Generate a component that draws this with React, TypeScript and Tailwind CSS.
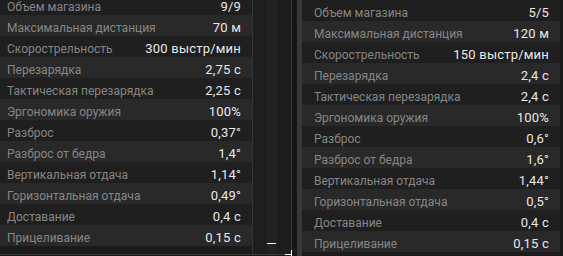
import React from "react";

type Stat = { label: string; value: string };

const leftStats: Stat[] = [
  { label: "Объем магазина", value: "9/9" },
  { label: "Максимальная дистанция", value: "70 м" },
  { label: "Скорострельность", value: "300 выстр/мин" },
  { label: "Перезарядка", value: "2,75 с" },
  { label: "Тактическая перезарядка", value: "2,25 с" },
  { label: "Эргономика оружия", value: "100%" },
  { label: "Разброс", value: "0,37°" },
  { label: "Разброс от бедра", value: "1,4°" },
  { label: "Вертикальная отдача", value: "1,14°" },
  { label: "Горизонтальная отдача", value: "0,49°" },
  { label: "Доставание", value: "0,4 с" },
  { label: "Прицеливание", value: "0,15 с" },
];

const rightStats: Stat[] = [
  { label: "Объем магазина", value: "5/5" },
  { label: "Максимальная дистанция", value: "120 м" },
  { label: "Скорострельность", value: "150 выстр/мин" },
  { label: "Перезарядка", value: "2,4 с" },
  { label: "Тактическая перезарядка", value: "2,4 с" },
  { label: "Эргономика оружия", value: "100%" },
  { label: "Разброс", value: "0,6°" },
  { label: "Разброс от бедра", value: "1,6°" },
  { label: "Вертикальная отдача", value: "1,44°" },
  { label: "Горизонтальная отдача", value: "0,5°" },
  { label: "Доставание", value: "0,4 с" },
  { label: "Прицеливание", value: "0,15 с" },
];

const StatRows = ({ stats, pl }: { stats: Stat[]; pl: string }) => (
  <div className="flex flex-col">
    {stats.map((s, i) => (
      <div
        key={s.label}
        className={`flex h-[21px] items-center justify-between pt-[4px] ${pl} pr-[11px] ${
          i % 2 === 0 ? "bg-[#1f1f1f]" : "bg-[#292929]"
        }`}
      >
        <span className="text-[12px] text-[#868686]">{s.label}</span>
        <span className="text-[13px] tracking-[0.2px] text-[#e8e8e8]">{s.value}</span>
      </div>
    ))}
  </div>
);

const App = () => {
  return (
    <div
      className="flex h-[256px] w-[563px] overflow-hidden bg-[#1b1b1b] leading-none"
      style={{ fontFamily: "Roboto, 'Liberation Sans', sans-serif" }}
    >
      {/* left panel */}
      <div className="relative h-[255px] w-[292px] shrink-0 border-b border-r border-[#3a3a3a]">
        <div className="flex h-full overflow-hidden">
          <div className="-mt-[6px] w-[252px] shrink-0">
            <StatRows stats={leftStats} pl="pl-[7px]" />
          </div>
          <div className="flex h-full w-[39px] border-l border-[#353535]">
            <div className="w-[14px] bg-[#1e1e1e]" />
            <div className="flex w-[10px] flex-col justify-end bg-[#222222] pb-[10px]">
              <div className="h-[1px] w-[9px] bg-white" />
            </div>
            <div className="flex-1 bg-[#1d1d1d]" />
          </div>
        </div>
        <div className="absolute -right-[1px] -bottom-[2px] h-[6px] w-[6px] border-r border-white">
          <div className="absolute bottom-[1px] right-0 h-[1px] w-[6px] bg-white" />
        </div>
      </div>

      {/* gap */}
      <div className="w-[5px] shrink-0 bg-[#161616]" />

      {/* right panel */}
      <div className="flex h-full shrink-0 border-l-[5px] border-[#383838]">
        <div className="w-[258px]">
          <StatRows stats={rightStats} pl="pl-[12px]" />
        </div>
        <div className="w-[3px] bg-[#181818]" />
      </div>
    </div>
  );
};

export default App;
